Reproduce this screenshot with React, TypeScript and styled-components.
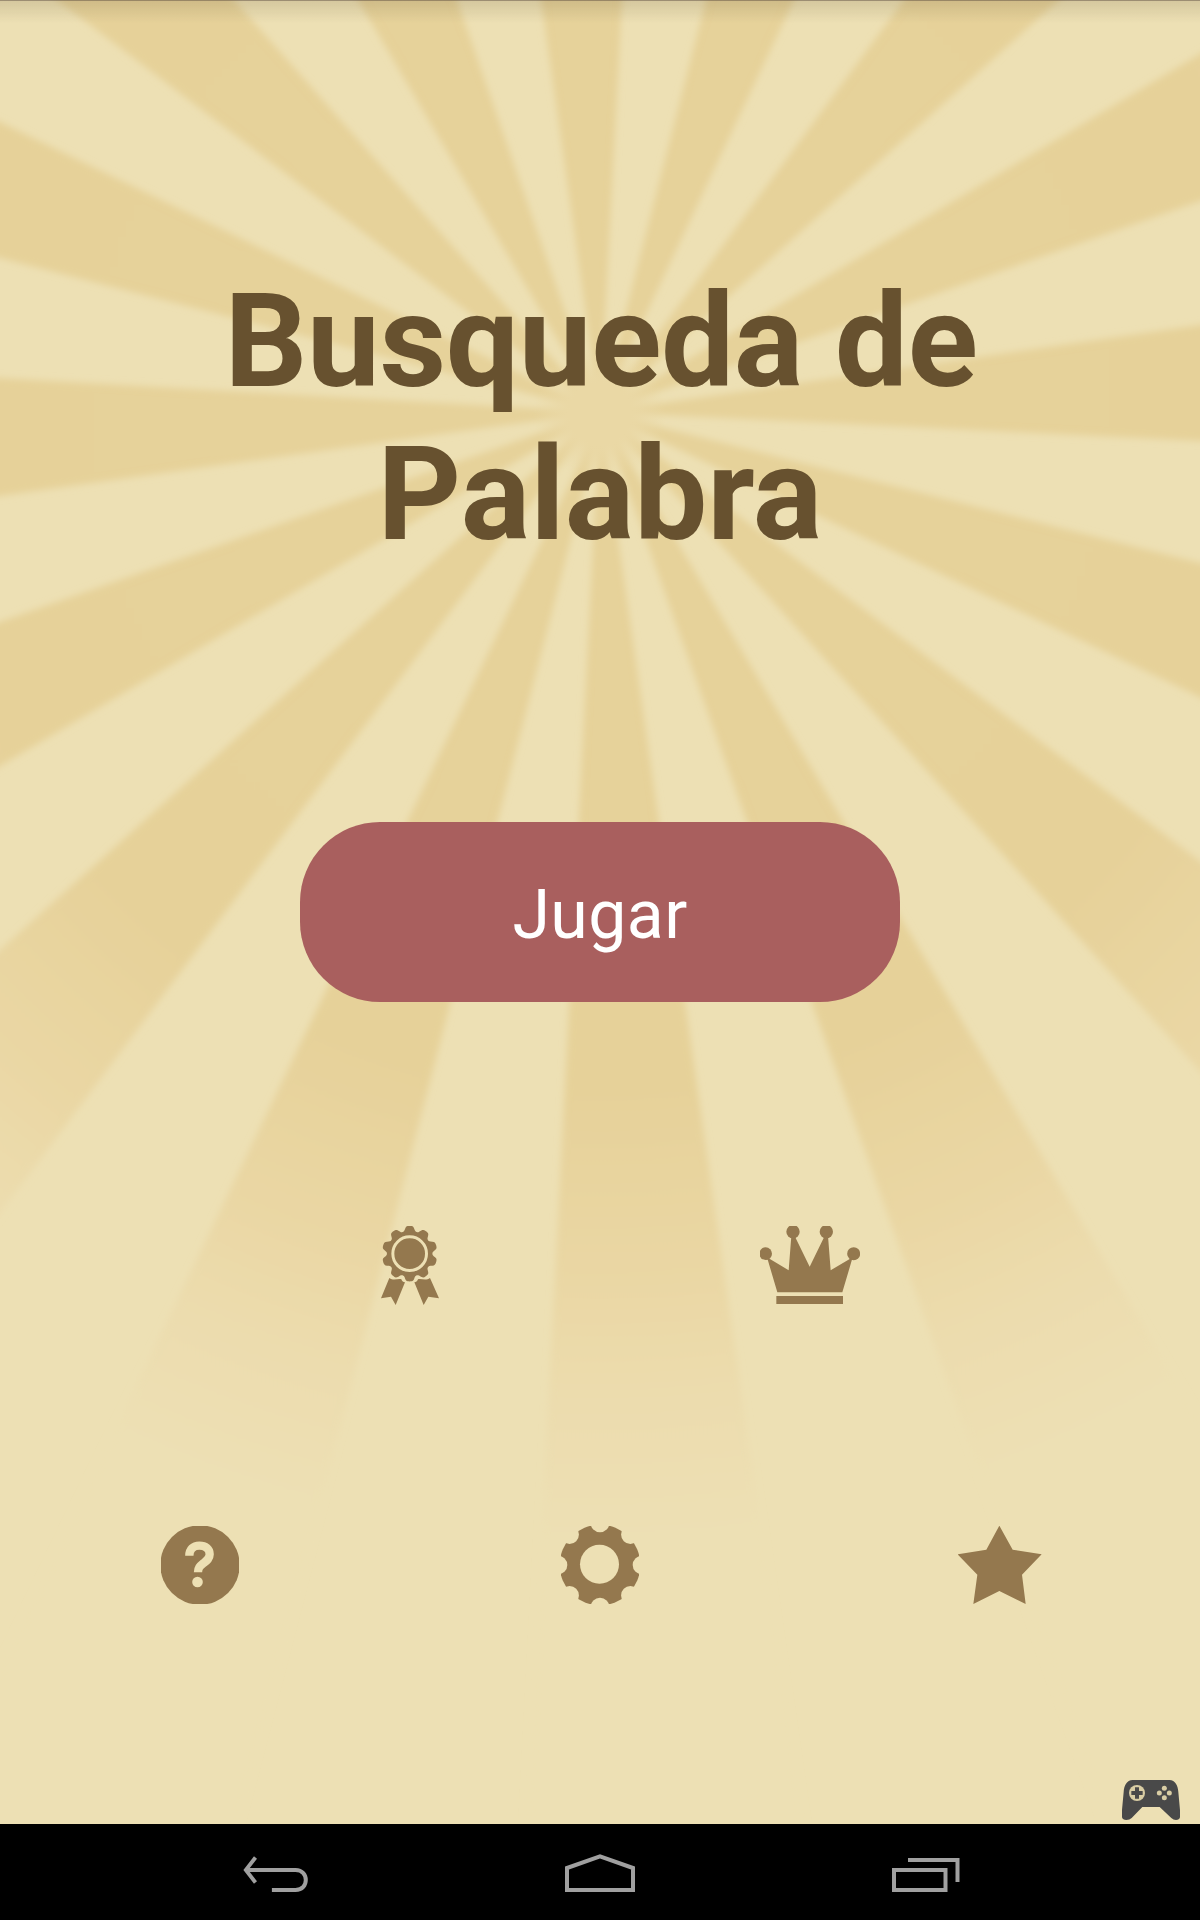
import React from "react";
import styled, { createGlobalStyle } from "styled-components";

const BROWN = "#94784e";
const CREAM = "#ede0b4";
const NAV_GREY = "#a0a0a0";

const GlobalStyle = createGlobalStyle`
  body {
    margin: 0;
    background: #000;
    font-family: Roboto, "Liberation Sans", sans-serif;
  }
`;

const Screen = styled.div`
  width: 1200px;
  height: 1920px;
  display: flex;
  flex-direction: column;
  overflow: hidden;
`;

const Stage = styled.main`
  position: relative;
  isolation: isolate;
  flex: 1;
  display: flex;
  flex-direction: column;
  align-items: center;
  background: ${CREAM};
  overflow: hidden;
`;

const Backdrop = styled.svg`
  position: absolute;
  inset: 0;
  z-index: -1;
`;

const TopShadow = styled.div`
  position: absolute;
  inset: 0 0 auto 0;
  height: 22px;
  border-top: 1px solid rgba(75, 60, 50, 0.5);
  background: linear-gradient(rgba(90, 75, 45, 0.16), rgba(90, 75, 45, 0));
  z-index: -1;
`;

const Title = styled.h1`
  width: 800px;
  height: 305px;
  margin: 265px 0 0;
  color: #67512f;
  font-size: 130px;
  font-weight: 700;
  line-height: 153px;
  text-align: center;
`;

const TitleLine = styled.span<{ $tracking?: number }>`
  display: block;
  letter-spacing: ${(p) => p.$tracking ?? 0}px;
  padding-left: ${(p) => (p.$tracking ? 2 : 0)}px;
`;

const PlayButton = styled.button`
  width: 600px;
  height: 180px;
  margin-top: 252px;
  padding: 5px 0 0;
  border: 0;
  border-radius: 80px;
  background: #a95f5e;
  color: #fff;
  font-family: inherit;
  font-size: 68px;
  letter-spacing: 0.4px;
  line-height: 80px;
`;

const IconRow = styled.div<{ $columns: number; $top: number; $indent?: number }>`
  display: grid;
  grid-template-columns: repeat(${(p) => p.$columns}, 400px);
  justify-items: center;
  align-items: start;
  height: 80px;
  margin-top: ${(p) => p.$top}px;
  padding-left: ${(p) => p.$indent ?? 0}px;
`;

const IconButton = styled.button`
  display: flex;
  padding: 0;
  border: 0;
  background: none;
`;

const Glyph = styled.svg`
  display: block;
  fill: ${BROWN};
`;

const Footer = styled.div`
  display: flex;
  align-self: stretch;
  justify-content: flex-end;
  margin-top: auto;
  padding: 0 20px 4px 0;
`;

const NavBar = styled.nav`
  display: grid;
  grid-template-columns: 328px 328px 328px;
  justify-content: center;
  justify-items: center;
  height: 96px;
  padding-top: 28px;
  box-sizing: border-box;
  background: #000;
`;

const NavGlyph = styled.svg`
  display: block;
  fill: none;
  stroke: ${NAV_GREY};
  stroke-width: 4;
`;

interface Ray {
  edge: [number, number, number, number];
  apexX?: number;
}

/* Each dark ray: two points on its outer edges, and where its tip sits. */
const rays: Ray[] = [
  { edge: [57, 0, 234, 0] },
  { edge: [358, 0, 457, 0] },
  { edge: [541, 0, 622, 0] },
  { edge: [706, 0, 794, 0] },
  { edge: [904, 0, 1059, 0] },
  { edge: [1200, 54, 1200, 201] },
  { edge: [1200, 325, 1200, 441] },
  { edge: [1200, 563, 1200, 697] },
  { edge: [1200, 861, 1200, 1071] },
  { edge: [1200, 1421, 995, 1514] },
  { edge: [765, 1557, 543, 1507] },
  { edge: [323, 1493, 119, 1421], apexX: 604 },
  { edge: [0, 1213, 0, 950] },
  { edge: [0, 766, 0, 622] },
  { edge: [0, 496, 0, 378] },
  { edge: [0, 258, 0, 122] },
];

const rayPoints = ({ edge: [ax, ay, bx, by], apexX = 600 }: Ray) => {
  const extend = (x: number, y: number) =>
    `${apexX + (x - apexX) * 1.6},${412 + (y - 412) * 1.6}`;
  return `${apexX},412 ${extend(ax, ay)} ${extend(bx, by)}`;
};

function Sunburst() {
  return (
    <Backdrop width="1200" height="1824" viewBox="0 0 1200 1824">
      <defs>
        <radialGradient id="ray" gradientUnits="userSpaceOnUse" cx="600" cy="412" r="1130">
          <stop offset="0" stopColor="#e6d29a" />
          <stop offset="0.6" stopColor="#e6d199" />
          <stop offset="0.77" stopColor="#ead7a4" />
          <stop offset="0.88" stopColor="#ecdcae" />
          <stop offset="1" stopColor={CREAM} />
        </radialGradient>
        <radialGradient id="core" gradientUnits="userSpaceOnUse" cx="600" cy="414" r="66">
          <stop offset="0.45" stopColor="#ead8a5" />
          <stop offset="1" stopColor="#ead8a5" stopOpacity="0" />
        </radialGradient>
        <filter id="soft" filterUnits="userSpaceOnUse" x="-50" y="-50" width="1300" height="1924">
          <feGaussianBlur stdDeviation="3.5" />
        </filter>
      </defs>
      <g filter="url(#soft)" fill="url(#ray)">
        {rays.map((ray, i) => (
          <polygon key={i} points={rayPoints(ray)} />
        ))}
      </g>
      <circle cx="600" cy="414" r="66" fill="url(#core)" />
    </Backdrop>
  );
}

const rosette = Array.from({ length: 180 }, (_, i) => {
  const a = (i * Math.PI) / 90;
  const r = 75 + 8.5 * Math.tanh(1.6 * Math.cos(10 * a) + 0.5);
  return `${(152 + r * Math.sin(a)).toFixed(1)},${(131 - r * Math.cos(a)).toFixed(1)}`;
}).join(" ");

const AwardIcon = () => (
  <Glyph width="58" height="79" viewBox="66 48 174 237">
    <polygon points={rosette} />
    <circle cx="152" cy="131" r="50.5" fill="none" stroke={CREAM} strokeWidth="9" />
    <path d="M91 204C103 214 118 205 127 208C129 214 133 217 138 217L110 285L96 260L66 265Z" />
    <path d="M213 204C201 214 186 205 177 208C175 214 171 217 166 217L194 285L208 260L240 265Z" />
  </Glyph>
);

const CrownIcon = () => (
  <Glyph width="100" height="78" viewBox="60 48 300 234">
    <circle cx="159" cy="65" r="20" />
    <circle cx="259" cy="65" r="20" />
    <circle cx="77" cy="131" r="19" />
    <circle cx="341" cy="131" r="19.5" />
    <path d="M81 142L146 181L154 78H164L209 170L254 78H264L272 181L338 142L307 247H112Z" />
    <rect x="109" y="258" width="200" height="24" />
  </Glyph>
);

const HelpIcon = () => (
  <Glyph width="78" height="78" viewBox="63 48 234 234">
    <circle cx="180" cy="165" r="119" />
    <path
      d="M148 137C148 118 160 107 178 107C197 107 209 117 209 133C209 146 200 152 190 160C179 169 174 174 174 187"
      fill="none"
      stroke={CREAM}
      strokeWidth="25"
    />
    <circle cx="172.500" cy="216" r="16" fill={CREAM} />
  </Glyph>
);

const GearIcon = () => (
  <Glyph width="78" height="78" viewBox="63 48 234 234">
    <mask id="teeth" maskUnits="userSpaceOnUse" x="50" y="35" width="260" height="260">
      <circle cx="180" cy="165" r="121" fill="#fff" />
      <circle cx="178.500" cy="162.500" r="58.500" fill="#000" />
      {[0, 45, 90, 135, 180, 225, 270, 315].map((deg) => (
        <circle
          key={deg}
          cx="180"
          cy={deg % 90 ? 36 : 39}
          r="28"
          fill="#000"
          transform={`rotate(${deg} 180 165)`}
        />
      ))}
    </mask>
    <rect x="60" y="45" width="240" height="240" mask="url(#teeth)" />
  </Glyph>
);

const StarIcon = () => (
  <Glyph width="84" height="78" viewBox="54 48 252 234">
    <path d="M178 47L218 119L305 133L246 194L257 282L178 243L100 282L112 194L53 133L139 119Z" />
  </Glyph>
);

const GamepadIcon = () => (
  <Glyph width="58" height="40" viewBox="66 60 174 120">
    <path
      fill="#494949"
      d="M98 60H208C226 60 234 78 235 96L240 150V172Q238 180 228 180Q220 180 214 174L179 141H127L95 174Q89 180 79 180Q68 180 66 172V150L71 96C72 78 80 60 98 60Z"
    />
    <circle cx="111" cy="99" r="24" fill="#d9cda4" />
    <path d="M111 82V116M94 99H128" stroke="#494949" strokeWidth="12" />
    <g fill="#d9cda4">
      <circle cx="193" cy="85" r="7.500" />
      <circle cx="178" cy="99" r="7.500" />
      <circle cx="208" cy="99" r="7.500" />
      <circle cx="193" cy="113" r="7.500" />
    </g>
  </Glyph>
);

export default function App() {
  return (
    <>
      <GlobalStyle />
      <Screen>
        <Stage>
          <Sunburst />
          <TopShadow />
          <Title>
            <TitleLine $tracking={-0.4}>Busqueda de</TitleLine>
            <TitleLine>Palabra</TitleLine>
          </Title>
          <PlayButton>Jugar</PlayButton>
          <IconRow $columns={2} $top={224} $indent={20}>
            <IconButton aria-label="Logros"><AwardIcon /></IconButton>
            <IconButton aria-label="Clasificación"><CrownIcon /></IconButton>
          </IconRow>
          <IconRow $columns={3} $top={220}>
            <IconButton aria-label="Ayuda"><HelpIcon /></IconButton>
            <IconButton aria-label="Ajustes"><GearIcon /></IconButton>
            <IconButton aria-label="Valorar"><StarIcon /></IconButton>
          </IconRow>
          <Footer>
            <GamepadIcon />
          </Footer>
        </Stage>
        <NavBar>
          <NavGlyph width="72" height="42" viewBox="236.500 1852 72 42">
            <path d="M272.400 1890H296C303 1890 306.300 1885 306.300 1880S303 1870 296 1870H247" />
            <path d="M256 1857.500L246.300 1870L256 1882.500" strokeWidth="3.800" />
          </NavGlyph>
          <NavGlyph width="72" height="42" viewBox="564 1852 72 42">
            <path d="M567 1890V1868L600 1856.300L633 1868V1890Z" />
          </NavGlyph>
          <NavGlyph width="72" height="42" viewBox="892 1852 72 42">
            <path d="M894 1870H945.500V1890H894Z" />
            <path d="M908 1860H957.500V1882" />
          </NavGlyph>
        </NavBar>
      </Screen>
    </>
  );
}
